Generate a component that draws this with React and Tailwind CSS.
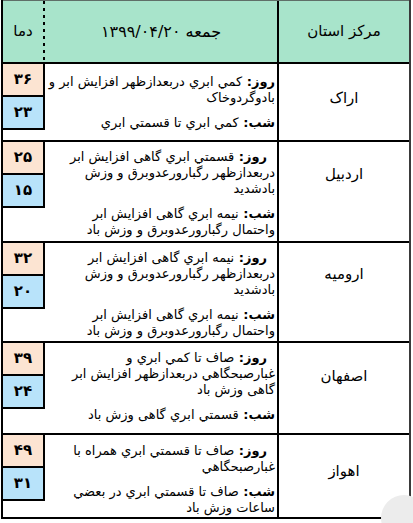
import React from 'react'

const rows = [
  {
    city: 'اراک',
    hi: '۳۶',
    lo: '۲۳',
    h: 'h-[78px]',
    pt: 'pt-[10px]',
    cityPt: 'pt-[24px]',
    indent: false,
    day: ['کمي ابري دربعدازظهر افزايش ابر و', 'بادوگردوخاک'],
    night: ['کمي ابري تا قسمتي ابري'],
  },
  {
    city: 'اردبيل',
    hi: '۲۵',
    lo: '۱۵',
    h: 'h-[101px]',
    pt: 'pt-[7px]',
    cityPt: 'pt-[22px]',
    indent: true,
    day: ['قسمتي ابري گاهی افزايش ابر', 'دربعدازظهر رگبارورعدوبرق و وزش', 'بادشديد'],
    night: ['نيمه ابري گاهی افزايش ابر', 'واحتمال رگبارورعدوبرق و وزش باد'],
  },
  {
    city: 'اروميه',
    hi: '۳۲',
    lo: '۲۰',
    h: 'h-[100px]',
    pt: 'pt-[7px]',
    cityPt: 'pt-[21px]',
    indent: true,
    day: ['نيمه ابري گاهی افزايش ابر', 'دربعدازظهر رگبارورعدوبرق و وزش', 'بادشديد'],
    night: ['نيمه ابري گاهی افزايش ابر', 'واحتمال رگبارورعدوبرق و وزش باد'],
  },
  {
    city: 'اصفهان',
    hi: '۳۹',
    lo: '۲۴',
    h: 'h-[92px]',
    pt: 'pt-[7px]',
    cityPt: 'pt-[23px]',
    indent: true,
    day: ['صاف تا کمي ابري و', 'غبارصبحگاهي دربعدازظهر افزايش ابر', 'گاهی وزش باد'],
    night: ['قسمتي ابري گاهی وزش باد'],
  },
  {
    city: 'اهواز',
    hi: '۴۹',
    lo: '۳۱',
    h: 'h-[84px]',
    pt: 'pt-[8px]',
    cityPt: 'pt-[26px]',
    indent: true,
    day: ['صاف تا قسمتي ابري همراه با', 'غبارصبحگاهي'],
    night: ['صاف تا قسمتي ابري در بعضي', 'ساعات وزش باد'],
  },
]

const Para = ({ label, lines, indent, className }) => (
  <div className={className}>
    {lines.map((line, i) => (
      <div key={i} className={`whitespace-nowrap ${i === 0 && indent ? 'pr-[8px]' : ''}`}>
        {i === 0 && <span className="font-bold">{label}: </span>}
        {line}
      </div>
    ))}
  </div>
)

const App = () => {
  return (
    <div className="relative w-[413px] h-[523px] bg-white overflow-hidden font-['DejaVu_Sans',sans-serif] text-black">
      <div className="ml-px w-[410px] border-x-2 border-l-black border-r-[#3a3a3a]">
        {/* header */}
        <div className="flex h-[64px] bg-[#a8e4cb] border-t border-t-[#5f6f68] border-b-2 border-b-black">
          <div className="w-[40px] flex items-center justify-center text-[15px]" dir="rtl">دما</div>
          <div className="w-[2px] bg-[repeating-linear-gradient(to_bottom,#000_0_3px,transparent_3px_7px)]" />
          <div className="flex-1 flex items-center justify-center text-[16px]" dir="rtl">
            جمعه ۱۳۹۹/۰۴/۲۰
          </div>
          <div className="w-[132px] border-l-2 border-black flex items-center justify-center text-[15px]" dir="rtl">
            مرکز استان
          </div>
        </div>

        {rows.map((r) => (
          <div key={r.city} className={`flex ${r.h} border-b-2 border-black`}>
            <div className="w-[42px] flex flex-col">
              <div className="h-[33px] bg-[#fce4d2] border-r-2 border-b-2 border-black flex items-center justify-center text-[15px] font-bold">
                {r.hi}
              </div>
              <div className="h-[33px] bg-[#b8e3fa] border-r-2 border-b-2 border-black flex items-center justify-center text-[15px] font-bold">
                {r.lo}
              </div>
            </div>
            <div className={`flex-1 ${r.pt} pr-[2px] text-[13px] leading-4 text-right`} dir="rtl">
              <Para label="روز" lines={r.day} indent={r.indent} />
              <Para label="شب" lines={r.night} className="mt-[9px]" />
            </div>
            <div className={`w-[132px] border-l-2 border-black ${r.cityPt} text-center text-[15px] leading-5`} dir="rtl">
              {r.city}
            </div>
          </div>
        ))}
      </div>
      <div className="absolute right-[-14px] bottom-[-18px] w-[46px] h-[46px] rounded-full bg-[#ececec]" />
    </div>
  )
}

export default App
